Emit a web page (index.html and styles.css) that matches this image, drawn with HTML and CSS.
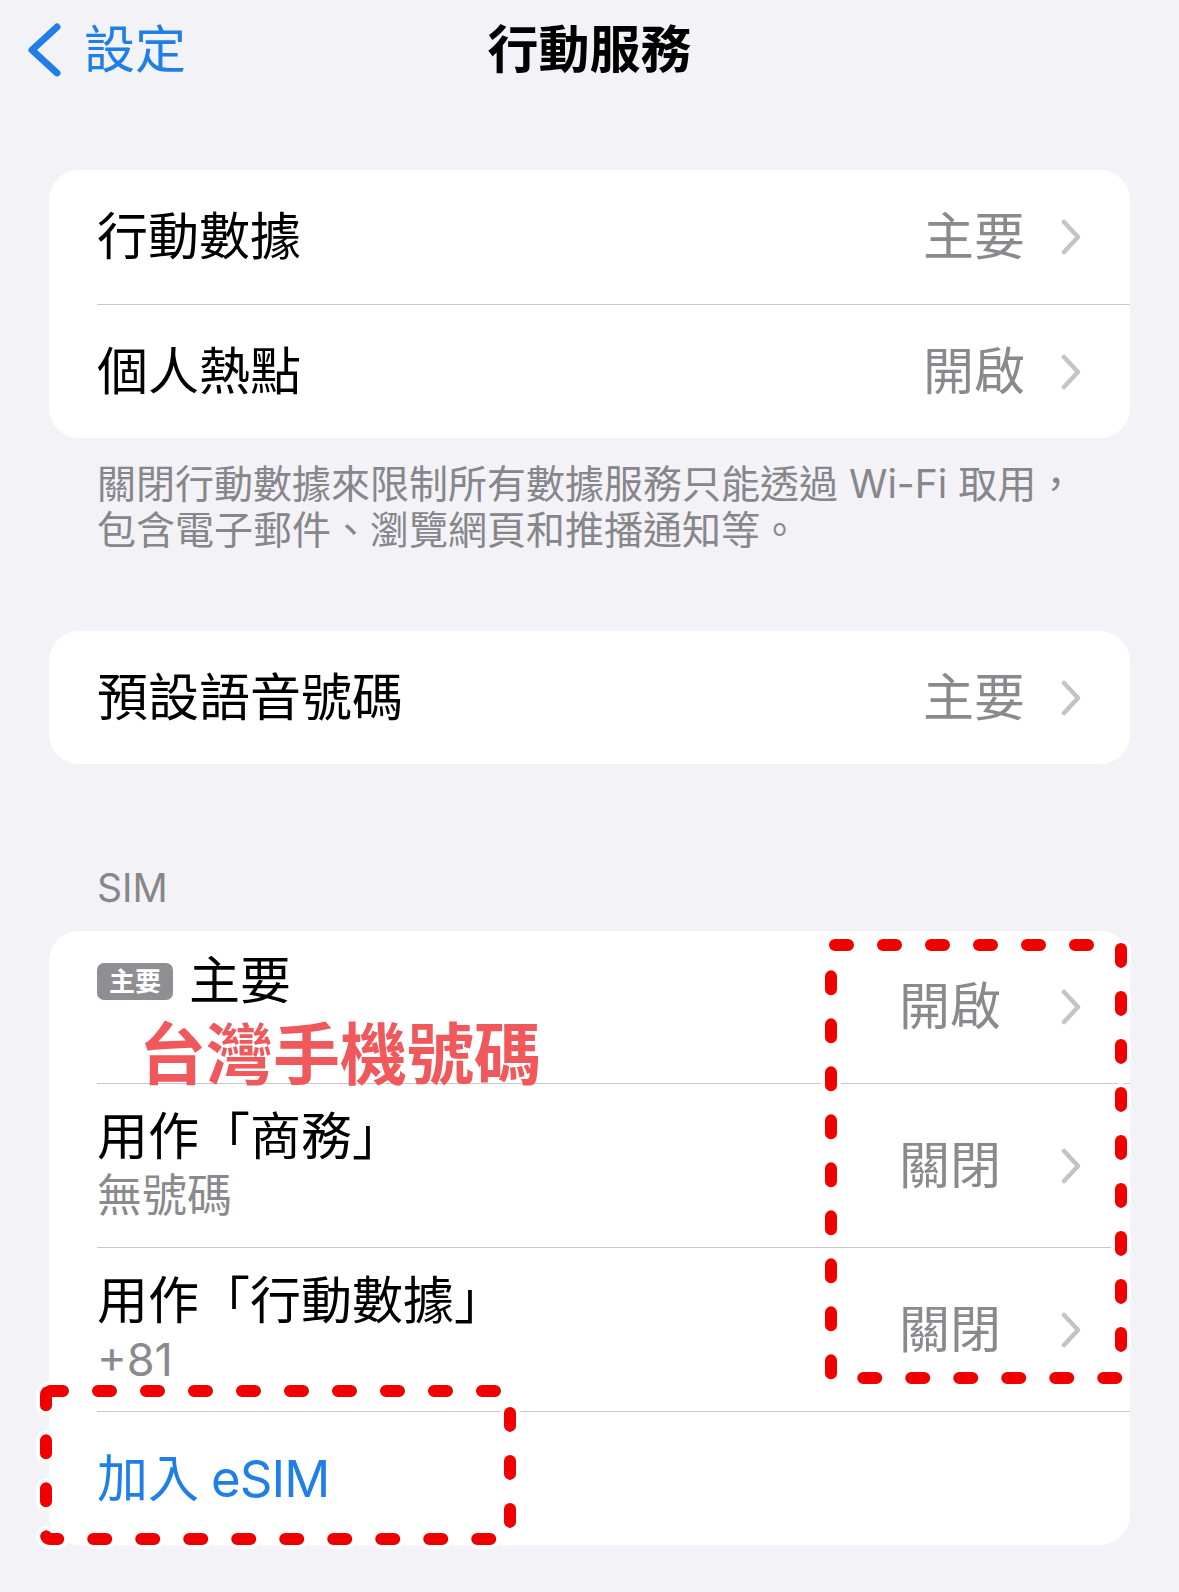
FILE: index.html
```html
<!DOCTYPE html>
<html lang="zh-Hant">
<head>
<title>行動服務</title>
<meta name="viewport" content="width=device-width, initial-scale=1.0">
<link rel="stylesheet" href="styles.css">
</head>
<body>

<div class="screen">
    <header class="navbar">
        <a class="nav-back">
            <svg class="back-icon" width="36" height="54" viewBox="0 0 36 54">
                <path d="M31 4 L6 27 L31 50" fill="none" stroke="currentColor" stroke-width="7" stroke-linecap="round" stroke-linejoin="round"/>
            </svg>
            設定
        </a>
        <h1 class="nav-title">行動服務</h1>
        <span></span>
    </header>

    <div class="card first">
        <div class="row">
            <div class="row-body">
                <span class="row-title">行動數據</span>
                <span class="row-value">主要</span>
                <svg class="chevron" width="22" height="36" viewBox="0 0 22 36"><path d="M4 3 L18 18 L4 33" fill="none" stroke="currentColor" stroke-width="4.5" stroke-linecap="round" stroke-linejoin="round"/></svg>
            </div>
        </div>
        <div class="row">
            <div class="row-body">
                <span class="row-title">個人熱點</span>
                <span class="row-value">開啟</span>
                <svg class="chevron" width="22" height="36" viewBox="0 0 22 36"><path d="M4 3 L18 18 L4 33" fill="none" stroke="currentColor" stroke-width="4.5" stroke-linecap="round" stroke-linejoin="round"/></svg>
            </div>
        </div>
    </div>
    <p class="group-footer">關閉行動數據來限制所有數據服務只能透過 Wi-Fi 取用，<br>包含電子郵件、瀏覽網頁和推播通知等。</p>

    <div class="card voice">
        <div class="row">
            <div class="row-body">
                <span class="row-title">預設語音號碼</span>
                <span class="row-value">主要</span>
                <svg class="chevron" width="22" height="36" viewBox="0 0 22 36"><path d="M4 3 L18 18 L4 33" fill="none" stroke="currentColor" stroke-width="4.5" stroke-linecap="round" stroke-linejoin="round"/></svg>
            </div>
        </div>
    </div>

    <h2 class="group-header">SIM</h2>
    <div class="card sim">
        <div class="row">
            <div class="row-body tall">
                <div class="row-text top">
                    <span class="row-title"><span class="badge">主要</span>主要</span>
                </div>
                <span class="row-value wide">開啟</span>
                <svg class="chevron" width="22" height="36" viewBox="0 0 22 36"><path d="M4 3 L18 18 L4 33" fill="none" stroke="currentColor" stroke-width="4.5" stroke-linecap="round" stroke-linejoin="round"/></svg>
            </div>
        </div>
        <div class="row">
            <div class="row-body double">
                <div class="row-text">
                    <span class="row-title">用作「商務」</span>
                    <span class="row-sub">無號碼</span>
                </div>
                <span class="row-value wide">關閉</span>
                <svg class="chevron" width="22" height="36" viewBox="0 0 22 36"><path d="M4 3 L18 18 L4 33" fill="none" stroke="currentColor" stroke-width="4.5" stroke-linecap="round" stroke-linejoin="round"/></svg>
            </div>
        </div>
        <div class="row">
            <div class="row-body double">
                <div class="row-text">
                    <span class="row-title">用作「行動數據」</span>
                    <span class="row-sub">+81</span>
                </div>
                <span class="row-value wide">關閉</span>
                <svg class="chevron" width="22" height="36" viewBox="0 0 22 36"><path d="M4 3 L18 18 L4 33" fill="none" stroke="currentColor" stroke-width="4.5" stroke-linecap="round" stroke-linejoin="round"/></svg>
            </div>
        </div>
        <div class="row">
            <div class="row-body">
                <span class="row-title link">加入 <span class="latin">eSIM</span></span>
            </div>
        </div>

        <!-- annotations drawn on top of the screenshot -->
        <span class="note">台灣手機號碼</span>
        <svg class="marks" width="1081" height="614" viewBox="0 0 1081 614">
            <g fill="none" stroke-linecap="round" stroke-dasharray="13 35">
                <rect x="782" y="14" width="290" height="433" rx="4" stroke="#ffffff" stroke-width="20"/>
                <rect x="-3" y="460" width="464" height="148" rx="4" stroke="#ffffff" stroke-width="20"/>
                <rect x="782" y="14" width="290" height="433" rx="4" stroke="#f00000" stroke-width="12"/>
                <rect x="-3" y="460" width="464" height="148" rx="4" stroke="#f00000" stroke-width="12"/>
            </g>
        </svg>
    </div>
</div>

</body>
</html>
```

FILE: styles.css
```css
body {
    margin: 0;
    background-color: #f2f2f7;
    color: #000000;
    font-family: Inter, "Noto Sans CJK TC", sans-serif;
}
.screen {
    width: 1179px;
    min-height: 1592px;
    padding-bottom: 46px;
    box-sizing: border-box;
}
.navbar {
    height: 100px;
    display: grid;
    grid-template-columns: 1fr auto 1fr;
    align-items: center;
}
.nav-back {
    display: flex;
    align-items: center;
    gap: 22px;
    padding-left: 26px;
    color: #1f7fe6;
    font-size: 51px;
    line-height: 60px;
}
.back-icon {
    display: block;
}
.nav-title {
    margin: 0;
    font-size: 51px;
    font-weight: 700;
    line-height: 60px;
}
.card {
    margin: 0 49px;
    background: #ffffff;
    border-radius: 30px;
    position: relative;
}
.card.first {
    margin-top: 70px;
}
.card.voice {
    margin-top: 78px;
}
.row {
    padding-left: 48px;
}
.row-body {
    display: flex;
    align-items: center;
    min-height: 134px;
    padding-right: 48px;
    border-top: 1px solid #c8c7cc;
    box-sizing: border-box;
}
.row:first-child .row-body {
    border-top: none;
}
.voice .row-body {
    min-height: 133px;
}
.row-body.tall {
    min-height: 152px;
}
.row-body.double {
    min-height: 164px;
}
.row-text {
    flex: 1;
    display: flex;
    flex-direction: column;
}
.row-text.top {
    align-self: flex-start;
    padding-top: 20px;
}
.row-title {
    flex: 1;
    display: flex;
    align-items: center;
    font-size: 51px;
    line-height: 60px;
}
.row-title.link {
    color: #1f7fe6;
    gap: 12px;
}
.latin {
    letter-spacing: -1px;
}
.row-sub {
    font-size: 45px;
    line-height: 58px;
    color: #8a8a8e;
}
.row-value {
    font-size: 51px;
    line-height: 60px;
    color: #8a8a8e;
    margin-right: 35px;
}
.row-value.wide {
    margin-right: 59px;
}
.chevron {
    display: block;
    color: #c4c4c7;
}
.badge {
    display: inline-block;
    background: #8e8e93;
    color: #ffffff;
    font-size: 26px;
    font-weight: 600;
    line-height: 37px;
    padding: 0 12px;
    border-radius: 7px;
    margin-right: 16px;
}
.group-footer {
    margin: 23px 49px 0;
    padding-left: 48px;
    font-size: 39px;
    line-height: 46px;
    color: #86868b;
}
.group-header {
    margin: 101px 49px 20px;
    padding-left: 48px;
    font-size: 39px;
    font-weight: 400;
    line-height: 46px;
    color: #86868b;
}
.note {
    position: absolute;
    left: 90px;
    top: 90px;
    font-size: 67px;
    font-weight: 700;
    line-height: 67px;
    color: #f0585c;
    white-space: nowrap;
}
.marks {
    position: absolute;
    left: 0;
    top: 0;
    overflow: visible;
    pointer-events: none;
}
```
